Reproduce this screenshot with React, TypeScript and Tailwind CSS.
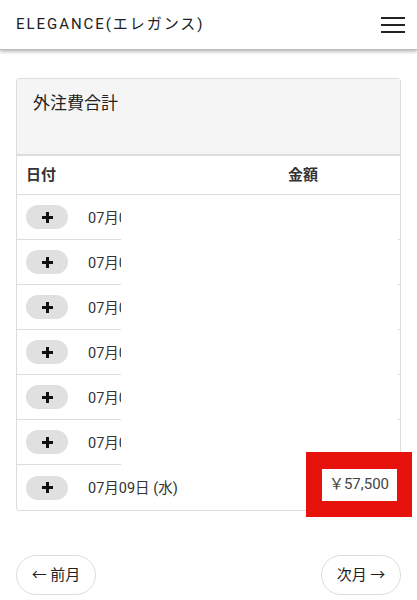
import React from 'react';

const rows = ['07月03日 (木)', '07月04日 (金)', '07月05日 (土)', '07月06日 (日)', '07月07日 (月)', '07月08日 (火)'];

function PlusButton() {
  return (
    <button className="flex h-6 w-[42px] items-center justify-center rounded-full bg-[#e0e0e0]">
      <svg width="13" height="13" viewBox="0 0 13 13">
        <path d="M6.5 1v11M1 6.5h11" stroke="#111" strokeWidth="3" />
      </svg>
    </button>
  );
}

export default function App() {
  return (
    <div className="min-h-[600px] bg-white text-[#333]" style={{ fontFamily: 'Roboto, "Noto Sans CJK JP", sans-serif' }}>
      <header className="flex h-[50px] items-center justify-between border-b border-[#bbb] bg-white pl-4 pr-3 shadow-[0_2px_3px_rgba(0,0,0,0.25)]">
        <h1 className="text-[15px] tracking-[0.13em] text-[#222]">ELEGANCE(エレガンス)</h1>
        <svg width="24" height="18" viewBox="0 0 24 18">
          <path d="M0 2h24M0 9h24M0 16h24" stroke="#222" strokeWidth="2" />
        </svg>
      </header>

      <main className="px-4 pt-7">
        <div className="relative rounded-[3px] border border-[#ddd]">
          <div className="h-[77px] border-b-2 border-[#ddd] bg-[#f5f5f5] px-4 pt-[12px] text-[17px] text-[#222]">外注費合計</div>
          <div className="flex h-[39px] items-center border-b border-[#ddd] pl-[9px] text-[15px] font-bold">
            <span className="w-[262px]">日付</span>
            <span>金額</span>
          </div>
          {rows.map((d) => (
            <div key={d} className="flex h-[45px] items-center gap-5 border-b border-[#ddd] pl-[9px] text-[14.5px]">
              <PlusButton />
              <span className="pt-[3px]">{d}</span>
            </div>
          ))}
          <div className="flex h-[45px] items-center gap-5 pl-[9px] text-[14.5px]">
            <PlusButton />
            <span className="pt-[3px]">07月09日 (水)</span>
          </div>

          {/* redacted region */}
          <div className="absolute left-[104px] top-[117px] h-[270px] w-[277px] bg-white" />
          {/* highlighted amount */}
          <div className="absolute left-[289px] top-[373px] flex h-[65px] w-[106px] items-center justify-center bg-[#e8120c]">
            <div className="flex h-[32px] w-[75px] items-center justify-center bg-white text-[15px] text-[#444]">￥57,500</div>
          </div>
        </div>

        <div className="mt-11 flex justify-between">
          <button className="h-[40px] w-[80px] rounded-full border border-[#ddd] text-[15px] text-[#222]">← 前月</button>
          <button className="h-[40px] w-[80px] rounded-full border border-[#ddd] text-[15px] text-[#222]">次月 →</button>
        </div>
      </main>
    </div>
  );
}
